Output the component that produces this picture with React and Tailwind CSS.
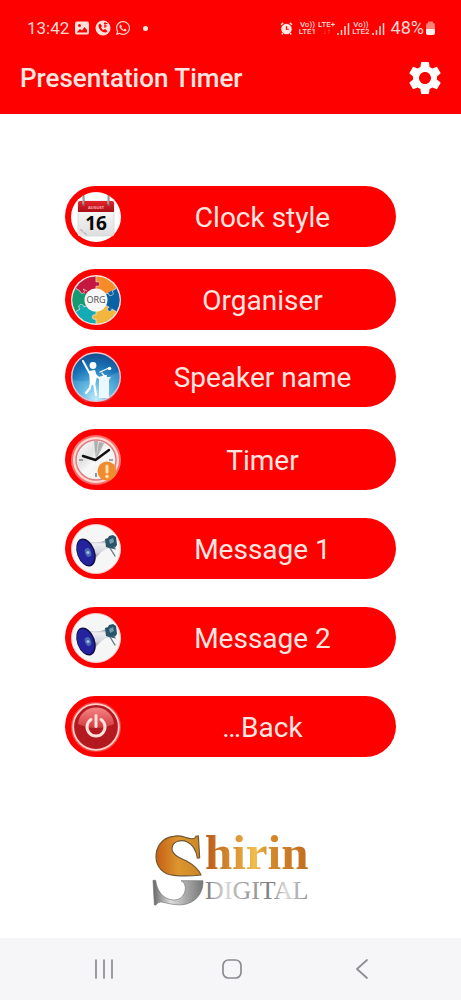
import { MdSettings } from "react-icons/md";
import { FaWhatsapp } from "react-icons/fa";

function CalendarIcon() {
  return (
    <svg viewBox="0 0 50 50" className="size-full" aria-hidden="true">
      <defs>
        <linearGradient id="calTop" x2="0" y2="1">
          <stop offset="0" stopColor="#e8232b" />
          <stop offset="1" stopColor="#a80f18" />
        </linearGradient>
        <linearGradient id="calPage" x2="0" y2="1">
          <stop offset="0" stopColor="#fff" />
          <stop offset="1" stopColor="#dedede" />
        </linearGradient>
      </defs>
      <circle cx="25" cy="25" r="25" fill="#fff" />
      <rect x="7" y="9" width="36" height="35" rx="2" fill="url(#calPage)" stroke="#ccc" strokeWidth=".6" />
      <path d="M7 20V11q0-2 2-2h32q2 0 2 2v9z" fill="url(#calTop)" />
      <path d="M8 37l8 7H9q-2 0-2-2z" fill="#e4e4e4" />
      <path d="M8 37q5 0 4 3 4 0 4 4z" fill="#bdbdbd" />
      <path d="M12.500 4v9M37.500 4v9" stroke="#777" strokeWidth="2" strokeLinecap="round" />
      <path d="M12 4v8M37 4v8" stroke="#ddd" strokeWidth=".8" />
      <text x="25" y="17" textAnchor="middle" fontSize="4" className="font-['Open_Sans',sans-serif] font-bold" fill="#ffb3b3">AUGUST</text>
      <text x="25" y="38" textAnchor="middle" fontSize="19" className="font-['Open_Sans',sans-serif] font-bold" fill="#080808">16</text>
    </svg>
  );
}

function OrganiserIcon() {
  return (
    <svg viewBox="0 0 50 50" className="size-full" aria-hidden="true">
      <circle cx="25" cy="25" r="25" fill="#f6e6df" />
      <path d="M25 25V1.500A23.500 23.500 0 0 0 4.600 13.300z" fill="#c5173f" />
      <path d="M25 25L45.400 13.300A23.500 23.500 0 0 0 25 1.500z" fill="#f68b28" />
      <path d="M25 25L45.400 36.700A23.500 23.500 0 0 0 45.400 13.300z" fill="#0862a5" />
      <path d="M25 25V48.500A23.500 23.500 0 0 0 45.400 36.700z" fill="#f0b63d" />
      <path d="M25 25L4.600 36.700A23.500 23.500 0 0 0 25 48.500z" fill="#13abb4" />
      <path d="M25 25L4.600 13.300A23.500 23.500 0 0 0 4.600 36.700z" fill="#159b74" />
      <g stroke="#f6e6df" strokeWidth=".7">
        <path d="M25 2v5c5-2 5 6 0 4v4" fill="#c5173f" />
        <path d="M45 13.500l-4 2.500c4 4-3 7-4 2l-4 2" fill="#0862a5" />
        <path d="M45 36.500l-4-2.500c-1 5-7 1-3-2l-4-2" fill="#0862a5" />
        <path d="M25 48v-4c-5 2-5-6 0-4v-5" fill="#f0b63d" />
        <path d="M5 36.500l4-2.500c-4-4 3-7 4-2l4-2" fill="#13abb4" />
        <path d="M5 13.500l4 2.500c1 5 7 1 3-2l4 2" fill="#c5173f" />
      </g>
      <circle cx="25" cy="25" r="11.500" fill="#f7f7f5" />
      <text x="25" y="28" textAnchor="middle" fontSize="9" className="font-['Open_Sans',sans-serif] font-medium" fill="#4a4a50">ORG</text>
    </svg>
  );
}

function SpeakerIcon() {
  return (
    <svg viewBox="0 0 50 50" className="size-full" aria-hidden="true">
      <defs>
        <radialGradient id="spk" cx=".5" cy=".95" r=".9">
          <stop offset="0" stopColor="#d5f5ff" />
          <stop offset=".35" stopColor="#5bb4e0" />
          <stop offset=".75" stopColor="#1773b6" />
          <stop offset="1" stopColor="#155293" />
        </radialGradient>
      </defs>
      <circle cx="25" cy="25" r="24.300" fill="url(#spk)" stroke="#f3c3cd" strokeWidth="1.400" />
      <path d="M1 28q22 5 48-9v9a24 24 0 0 1-48 0z" fill="#8bd3f1" opacity=".25" />
      <g fill="none" stroke="#fff" strokeLinecap="round" strokeLinejoin="round">
        <path d="M12 9l7 13" strokeWidth="2" />
        <path d="M22 21l6 5 7-2" strokeWidth="2" />
        <path d="M20 31l-1 5-4 5M23 31l2 12" strokeWidth="2.200" />
        <path d="M29 20l9-4M31 21l4 5" strokeWidth="1.300" />
      </g>
      <circle cx="22" cy="13.500" r="3.400" fill="#fff" />
      <path d="M18 19l6-1 2 7-2 8h-5z" fill="#fff" />
      <path d="M28 25h12l-2 3v18H28V28z" fill="#f1fbff" opacity=".95" />
      <circle cx="38.500" cy="16.500" r="1.800" fill="#fff" />
    </svg>
  );
}

function TimerIcon() {
  return (
    <svg viewBox="0 0 50 50" className="size-full" aria-hidden="true">
      <defs>
        <linearGradient id="dial" x2="1" y2="1">
          <stop offset="0" stopColor="#fff" />
          <stop offset=".35" stopColor="#e3e3e3" />
          <stop offset=".5" stopColor="#f8f8f8" />
          <stop offset="1" stopColor="#ececec" />
        </linearGradient>
      </defs>
      <circle cx="25" cy="25" r="25" fill="#f7706c" />
      <circle cx="25" cy="25" r="23" fill="#ffd9d4" />
      <circle cx="25" cy="25" r="20" fill="url(#dial)" stroke="#dd7f80" strokeWidth="1.500" />
      <path d="M25 25L23 6h4zM25 25L28 7l5 1z" fill="#777" opacity=".5" />
      <path d="M8 25h4M38 25h4M25 38v4" stroke="#555" strokeWidth="1.200" />
      <path d="M12 21L24.500 25 38 15" fill="none" stroke="#111" strokeWidth="2.500" strokeLinecap="round" strokeLinejoin="round" />
      <circle cx="36" cy="36" r="9.500" fill="#ef8d2e" />
      <path d="M36 31v6" stroke="#ffdeb3" strokeWidth="3" strokeLinecap="round" />
      <circle cx="36" cy="41.500" r="1.800" fill="#ffdeb3" />
    </svg>
  );
}

function MegaphoneIcon({ id }) {
  return (
    <svg viewBox="0 0 50 50" className="size-full" aria-hidden="true">
      <defs>
        <linearGradient id={id} x2="0" y2="1">
          <stop offset="0" stopColor="#5d6270" />
          <stop offset=".2" stopColor="#eeeef2" />
          <stop offset=".55" stopColor="#d4d6de" />
          <stop offset="1" stopColor="#5d6270" />
        </linearGradient>
      </defs>
      <circle cx="25" cy="25" r="24.500" fill="#f6f6f7" stroke="#ffc9c4" />
      <path d="M10 15q15 7 27 0l3 9q-11 1-18 15z" fill={`url(#${id})`} />
      <ellipse cx="15" cy="28.500" rx="9" ry="14.500" transform="rotate(-20 15 28.500)" fill="#11114f" />
      <ellipse cx="14.500" cy="28.500" rx="7.800" ry="13" transform="rotate(-20 14.500 28.500)" fill="#2522a0" />
      <ellipse cx="17" cy="28.500" rx="3" ry="4.500" transform="rotate(-20 17 28.500)" fill="#4968ad" />
      <circle cx="17" cy="28.500" r="1.500" fill="#a8bddc" />
      <path d="M34 15l3-1 1-2 4-1 3 2 1 8-3 4-5-1-3-1z" fill="#285369" />
      <path d="M38 16l4-2 1 4-4 2z" fill="#739cac" />
      <path d="M39 24l5 8M43 23l1 2" stroke="#647985" strokeWidth="1.400" strokeLinecap="round" />
    </svg>
  );
}

function PowerIcon() {
  return (
    <svg viewBox="0 0 50 50" className="size-full" aria-hidden="true">
      <defs>
        <linearGradient id="gloss" x2="0" y2="1">
          <stop offset="0" stopColor="#f68484" />
          <stop offset="1" stopColor="#d23b40" />
        </linearGradient>
      </defs>
      <circle cx="25" cy="25" r="24" fill="#b51920" stroke="#ed4a45" strokeWidth="2" />
      <circle cx="25" cy="25" r="22.800" fill="none" stroke="#ffd0ca" strokeWidth="1.800" />
      <path d="M7 22C9 0 41 0 43 22q-18 8-36 0z" fill="url(#gloss)" />
      <path d="M20 17.500a9 9 0 1 0 10 0" fill="none" stroke="#ffe0da" strokeWidth="3" strokeLinecap="round" />
      <path d="M25 13.500v11" stroke="#ffe0da" strokeWidth="3" strokeLinecap="round" />
    </svg>
  );
}

function MenuButton({ label, children }) {
  return (
    <button type="button" className="flex h-[61px] w-full items-center rounded-full bg-[#fe0000] pl-1.5 text-[28px] leading-8 text-[#ffe6e0]">
      <span className="size-[50px] shrink-0">{children}</span>
      <span className="flex-1 pt-0.5 pl-2 text-center">{label}</span>
    </button>
  );
}

function Signal() {
  return (
    <svg viewBox="0 0 13 13" className="size-[13px]" aria-hidden="true">
      <path d="M1 11v2M4.500 8v5M8 4v9M11.500 1v12" stroke="#ffd9d4" strokeWidth="1.500" />
    </svg>
  );
}

function StatusBar() {
  return (
    <div className="flex h-14 items-center justify-between pr-[26px] pl-[27px] text-[#ffd9d4]">
      <div className="flex items-center gap-1.5">
        <span className="text-[17px] leading-5">13:42</span>
        <svg viewBox="0 0 14 14" className="size-3.5" aria-hidden="true">
          <rect y=".5" width="14" height="13" rx="2" fill="#ffe0da" />
          <path d="M2 11l3-3 2 1.500L9.500 6 12 9v2.500H2z" fill="#fe0000" />
          <circle cx="4.500" cy="4.500" r="1.500" fill="#fe0000" />
        </svg>
        <svg viewBox="0 0 16 16" className="size-4" aria-hidden="true">
          <circle cx="8" cy="8" r="7.500" fill="#ffe0da" />
          <path d="M5 3.500l2 2.500-1 1.500q1 2 2.500 2.500l1.500-1 2.500 2-1.500 1.500C7 13 3 8.500 3.500 5z" fill="#fe0000" />
          <path d="M9 3.500h3.500M9 6h3M10 2v6" stroke="#fe0000" strokeWidth="1" />
        </svg>
        <FaWhatsapp className="-ml-0.5 size-4" />
        <span className="ml-1.5 size-[5px] rounded-full bg-[#ffe6e0]" />
      </div>
      <div className="flex items-center gap-0.5">
        <svg viewBox="0 0 14 14" className="mr-1 size-[13px]" aria-hidden="true">
          <circle cx="7" cy="7.500" r="5.700" fill="#ffe6e0" />
          <path d="M1 3l2.500-2M13 3l-2.500-2M3 12l-1 1.500M11 12l1 1.500" stroke="#ffe6e0" strokeWidth="1.600" />
          <path d="M7 4.500v3.300h2.500" fill="none" stroke="#fe0000" strokeWidth="1.300" />
        </svg>
        <span className="text-center text-[8px] leading-[7px] font-medium">Vo))<br />LTE1</span>
        <span className="text-center text-[8px] leading-[7px] font-medium">LTE+<br /><span className="text-[#ff7468]">↓↑</span></span>
        <Signal />
        <span className="text-center text-[8px] leading-[7px] font-medium">Vo))<br />LTE2</span>
        <Signal />
        <span className="ml-1 text-[18px] leading-5">48%</span>
        <svg viewBox="0 0 9 14" className="h-3.5 w-[9px]" aria-hidden="true">
          <path d="M2 2V.5h5V2q2 0 2 2v4H0V4q0-2 2-2z" fill="#ff8175" />
          <path d="M0 8h9v4q0 2-2 2H2q-2 0-2-2z" fill="#fff0ec" />
        </svg>
      </div>
    </div>
  );
}

function ShirinLogo() {
  return (
    <svg viewBox="0 0 180 90" className="h-[90px] w-[180px]" role="img" aria-label="Shirin Digital">
      <defs>
        <linearGradient id="gold">
          <stop offset="0" stopColor="#b95b18" />
          <stop offset=".28" stopColor="#d99133" />
          <stop offset=".48" stopColor="#f0bd4b" />
          <stop offset=".62" stopColor="#d58a2b" />
          <stop offset="1" stopColor="#c16d20" />
        </linearGradient>
        <linearGradient id="swash">
          <stop offset="0" stopColor="#c45f15" />
          <stop offset=".5" stopColor="#dd962e" />
          <stop offset="1" stopColor="#c98727" />
        </linearGradient>
        <linearGradient id="silver">
          <stop offset="0" stopColor="#6d6d6d" />
          <stop offset=".2" stopColor="#dddddd" />
          <stop offset=".35" stopColor="#a0a0a0" />
          <stop offset=".5" stopColor="#999" />
          <stop offset=".65" stopColor="#777" />
          <stop offset=".78" stopColor="#ddd" />
          <stop offset="1" stopColor="#888" />
        </linearGradient>
        <linearGradient id="steel">
          <stop offset="0" stopColor="#666" />
          <stop offset=".35" stopColor="#ddd" />
          <stop offset=".65" stopColor="#aaa" />
          <stop offset="1" stopColor="#777" />
        </linearGradient>
      </defs>
      <g transform="scale(.3333)">
        <path d="M165 34C162 43 149 43 136 38C124 33 110 31 98 34C61 38 45 67 45 96C46 126 66 149 99 151C129 154 160 152 180 150C175 137 158 120 137 108C111 97 92 87 93 70C95 48 121 42 139 51C157 60 166 79 169 99L176 98L172 33Z" fill="url(#swash)" stroke="#6f5632" strokeWidth="3.500" />
        <path d="M36 166H44C48 197 65 222 96 225C121 227 134 205 133 188C132 177 128 171 120 167H186C188 202 165 235 125 239C95 242 71 231 58 231Q48 232 45 240H40Z" fill="url(#steel)" stroke="#777" strokeWidth="2" />
      </g>
      <text x="64" y="44" fontSize="49" className="font-['Liberation_Serif',serif] font-bold" fill="url(#gold)">hirin</text>
      <text x="64" y="74" fontSize="26" className="font-['Liberation_Serif',serif]" fill="url(#silver)">DIGITAL</text>
    </svg>
  );
}

export default function App() {
  return (
    <div className="flex min-h-screen flex-col bg-white font-[Roboto,sans-serif]">
      <header className="h-[114px] bg-[#fe0000]">
        <StatusBar />
        <div className="flex h-11 items-center justify-between pr-4 pl-5">
          <h1 className="text-[26px] leading-8 font-medium text-[#ffe6e0]">Presentation Timer</h1>
          <button type="button" aria-label="Settings" className="text-white">
            <MdSettings className="size-10" />
          </button>
        </div>
      </header>
      <main className="flex flex-1 flex-col items-center px-[65px] pt-[72px]">
        <nav aria-label="Main menu" className="flex w-full flex-col gap-7">
          <div className="flex flex-col gap-[22px]">
            <MenuButton label="Clock style"><CalendarIcon /></MenuButton>
            <div className="flex flex-col gap-4">
              <MenuButton label="Organiser"><OrganiserIcon /></MenuButton>
              <MenuButton label="Speaker name"><SpeakerIcon /></MenuButton>
            </div>
            <MenuButton label="Timer"><TimerIcon /></MenuButton>
          </div>
          <MenuButton label="Message 1"><MegaphoneIcon id="horn1" /></MenuButton>
          <MenuButton label="Message 2"><MegaphoneIcon id="horn2" /></MenuButton>
          <MenuButton label="…Back"><PowerIcon /></MenuButton>
        </nav>
        <div className="pt-17 pb-5">
          <ShirinLogo />
        </div>
      </main>
      <footer className="grid h-[62px] grid-cols-3 items-center justify-items-center bg-[#f6f5f8] pr-9 pl-10 text-[#8d8b90]">
        <button type="button" aria-label="Recent apps">
          <svg viewBox="0 0 20 20" className="size-5" fill="none" stroke="currentColor" strokeWidth="1.700" strokeLinecap="round"><path d="M2 1v18M10 1v18M18 1v18" /></svg>
        </button>
        <button type="button" aria-label="Home">
          <svg viewBox="0 0 20 20" className="size-5" fill="none" stroke="currentColor" strokeWidth="1.700"><rect x="1" y="1" width="18" height="18" rx="5.500" /></svg>
        </button>
        <button type="button" aria-label="Back">
          <svg viewBox="0 0 20 20" className="size-5" fill="none" stroke="currentColor" strokeWidth="1.700" strokeLinecap="round" strokeLinejoin="round"><path d="M16 1L6 10l10 9" /></svg>
        </button>
      </footer>
    </div>
  );
}
